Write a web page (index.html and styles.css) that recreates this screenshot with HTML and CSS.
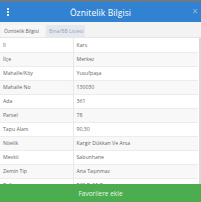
FILE: index.html
```html
<!DOCTYPE html>
<html>
<head>
<meta charset="utf-8">
<link rel="stylesheet" href="styles.css">
</head>
<body>
<div class="modal">
  <div class="topstrip"></div>
  <div class="header">
    <span class="menu"><i></i><i></i><i></i></span>
    <span class="title">Öznitelik Bilgisi</span>
    <span class="close">×</span>
  </div>
  <div class="tabs">
    <div class="tab active">Öznitelik Bilgisi</div>
    <div class="tab other">Bina/BB Listesi</div>
  </div>
  <div class="body">
    <table class="attrs">
      <tr><td>İl</td><td>Kars</td></tr>
      <tr><td>İlçe</td><td>Merkez</td></tr>
      <tr><td>Mahalle/Köy</td><td>Yusufpaşa</td></tr>
      <tr><td>Mahalle No</td><td>130030</td></tr>
      <tr><td>Ada</td><td>361</td></tr>
      <tr><td>Parsel</td><td>78</td></tr>
      <tr><td>Tapu Alanı</td><td>90,30</td></tr>
      <tr><td>Nitelik</td><td>Kargir Dükkan Ve Arsa</td></tr>
      <tr><td>Mevkii</td><td>Sabunhane</td></tr>
      <tr><td>Zemin Tip</td><td>Ana Taşınmaz</td></tr>
      <tr><td>Pafta</td><td>F48-D-19-B</td></tr>
    </table>
    <div class="scroll"></div>
    <div class="watermark">parselsorgu.com</div>
  </div>
  <div class="fav">Favorilere ekle</div>
</div>
</body>
</html>
```
FILE: styles.css
```css
* { box-sizing: border-box; }
html, body { margin: 0; padding: 0; }
body {
  width: 201px;
  height: 202px;
  overflow: hidden;
  font-family: "Open Sans", "Liberation Sans", sans-serif;
  background: #fff;
}
.modal {
  width: 201px;
  height: 202px;
  display: flex;
  flex-direction: column;
  position: relative;
}
.topstrip {
  height: 2px;
  background: #6c7a88;
}
.header {
  height: 20px;
  background: #3282d2;
  display: flex;
  align-items: center;
  justify-content: center;
  position: relative;
  color: #fff;
}
.title {
  font-size: 8.5px;
  font-weight: 500;
  letter-spacing: 0.1px;
}
.menu {
  position: absolute;
  left: 7px;
  top: 6px;
  display: flex;
  flex-direction: column;
  gap: 1px;
}
.menu i {
  display: block;
  width: 2px;
  height: 2px;
  background: #dfeaf6;
}
.close {
  position: absolute;
  right: 3px;
  top: 4px;
  font-size: 10px;
  line-height: 10px;
  color: #8fb8e4;
}
.tabs {
  height: 16px;
  background: #f3f3f3;
  display: flex;
  align-items: flex-end;
  padding-left: 1px;
  border-bottom: 1px solid #e6e6e6;
}
.tab {
  font-size: 5px;
  height: 12px;
  line-height: 12px;
  padding: 0 3px;
  color: #777;
  white-space: nowrap;
}
.tab.active {
  background: #f7f7f7;
  color: #666;
  width: 43px;
}
.tab.other {
  background: #e5e9ef;
  color: #9aa4b3;
  margin-left: 2px;
  width: 39px;
}
.body {
  flex: 1;
  position: relative;
  overflow: hidden;
  padding-right: 3px;
}
.attrs {
  width: 198px;
  border-collapse: collapse;
  font-size: 5.2px;
  color: #666;
}
.attrs td {
  height: 14px;
  padding: 0 3px;
  border-top: 1px solid #ececec;
  vertical-align: middle;
  white-space: nowrap;
}
.attrs tr:first-child td { border-top: none; }
.attrs td:first-child {
  width: 73px;
  border-right: 1px solid #e8e8e8;
}
.attrs tr:nth-child(even) td { background: #f8f8f8; }
.scroll {
  position: absolute;
  right: 0;
  top: 0;
  bottom: 0;
  width: 2px;
  background: #d8d8d8;
}
.watermark {
  position: absolute;
  left: 28px;
  top: 60px;
  font-size: 6px;
  color: rgba(0,0,0,0.05);
  transform: rotate(-45deg);
  pointer-events: none;
}
.fav {
  height: 18px;
  background: #4cad50;
  color: #eaf6ea;
  font-size: 6.5px;
  display: flex;
  align-items: center;
  justify-content: center;
}
```
